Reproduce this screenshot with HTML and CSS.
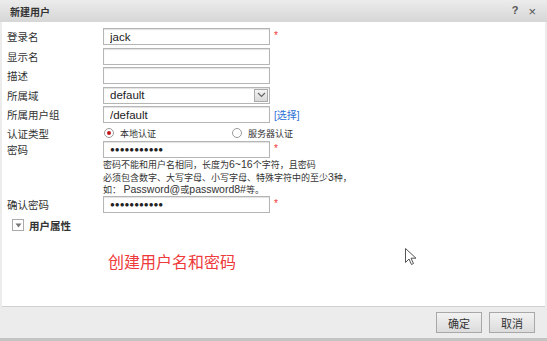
FILE: index.html
```html
<!DOCTYPE html>
<html lang="zh-CN">
<head>
    <meta charset="UTF-8">
    <meta name="viewport" content="width=device-width, initial-scale=1.0">
    <title>新建用户</title>
    <link rel="stylesheet" href="styles.css">
</head>
<body>

    <div class="dialog">
        <!-- Title bar -->
        <div class="titlebar">
            <span class="title">新建用户</span>
            <span class="tools"><span class="help">?</span><span class="close">×</span></span>
        </div>

        <!-- Form -->
        <div class="content">
            <div class="row">
                <label>登录名</label>
                <input class="field" type="text" value="jack">
                <span class="req">*</span>
            </div>
            <div class="row">
                <label>显示名</label>
                <input class="field" type="text">
            </div>
            <div class="row">
                <label>描述</label>
                <input class="field" type="text">
            </div>
            <div class="row">
                <label>所属域</label>
                <div class="field select">
                    <span>default</span>
                    <span class="arrow">
                        <svg width="9" height="6" viewBox="0 0 9 6"><path d="M1 1l3.5 3.5L8 1" fill="none" stroke="#666" stroke-width="1.2"/></svg>
                    </span>
                </div>
            </div>
            <div class="row">
                <label>所属用户组</label>
                <input class="field" type="text" value="/default">
                <a class="pick">[选择]</a>
            </div>
            <div class="row auth">
                <label>认证类型</label>
                <span class="radio checked"></span><span class="radio-text">本地认证</span>
                <span class="radio second"></span><span class="radio-text">服务器认证</span>
            </div>
            <div class="row">
                <label>密码</label>
                <input class="field pwd" type="text" value="●●●●●●●●●●●">
                <span class="req">*</span>
            </div>
            <div class="hint">
                密码不能和用户名相同，长度为<span class="latin">6~16</span>个字符，且密码<br>
                必须包含数字、大写字母、小写字母、特殊字符中的至少<span class="latin">3</span>种，<br>
                如： <span class="latin">Password@</span>或<span class="latin">password8#</span>等。
            </div>
            <div class="row">
                <label>确认密码</label>
                <input class="field pwd" type="text" value="●●●●●●●●●●●">
                <span class="req">*</span>
            </div>
            <div class="section">
                <span class="toggle">
                    <svg width="7" height="5" viewBox="0 0 7 5"><path d="M0.5 0.5h6L3.5 4.5z" fill="#777"/></svg>
                </span>
                <span class="section-title">用户属性</span>
            </div>
            <div class="note">创建用户名和密码</div>

            <!-- mouse pointer left in the screenshot -->
            <svg class="pointer" width="12" height="18" viewBox="0 0 12 18">
                <path d="M0.5 0.5v14l3.5-3.5 2.5 5.5 2-1-2.5-5.3h5z" fill="#fff" stroke="#555" stroke-width="1"/>
            </svg>
        </div>

        <!-- Buttons -->
        <div class="footer">
            <button>确定</button>
            <button>取消</button>
        </div>
    </div>

</body>
</html>
```

FILE: styles.css
```css
body {
    margin: 0;
    font-family: "Liberation Sans", Arial, "Noto Sans CJK SC", sans-serif;
    font-size: 12px;
    color: #333;
    background-color: #fff;
}

.dialog {
    width: 547px;
    height: 341px;
    display: flex;
    flex-direction: column;
    background-color: #ececec;
    border-bottom: 3px solid #c4c4c4;
    box-sizing: border-box;
}

.titlebar {
    height: 22px;
    display: flex;
    align-items: center;
    justify-content: space-between;
    padding: 0 8px 0 10px;
    background: linear-gradient(#ececec, #d6d6d6);
}

.title {
    font-weight: bold;
    color: #333;
    font-size: 10px;
}

.tools {
    display: flex;
    gap: 10px;
    color: #555;
    padding-right: 3px;
}

.help {
    font-weight: bold;
    font-size: 11px;
}

.close {
    font-size: 13px;
}

.content {
    position: relative;
    flex: 1;
    background-color: #fff;
    margin: 0 2px;
    padding: 6px 0 0 5px;
    border-bottom: 1px solid #d0d0d0;
}

.row {
    display: flex;
    align-items: center;
    height: 17px;
    margin-bottom: 2.5px;
}

.row label {
    width: 96px;
    flex-shrink: 0;
    font-size: 10.5px;
}

.field {
    width: 167px;
    height: 17px;
    box-sizing: border-box;
    border: 1px solid #b5b5b5;
    box-shadow: inset 0 1px 1px #e2e2e2;
    padding: 0 6px;
    font-family: inherit;
    font-size: 11.5px;
    color: #222;
    margin: 0;
}

.pwd {
    font-size: 8px;
}

.select {
    display: flex;
    align-items: center;
    justify-content: space-between;
    padding: 0 1px 0 6px;
}

.arrow {
    width: 14px;
    height: 13px;
    display: flex;
    align-items: center;
    justify-content: center;
    border: 1px solid #aaa;
    box-sizing: border-box;
    background: linear-gradient(#f4f4f4, #d8d8d8);
}

.req {
    color: #e33;
    font-size: 10px;
    margin-left: 4px;
    align-self: flex-start;
    margin-top: 2px;
}

.pick {
    color: #2a6fd6;
    margin-left: 4px;
    font-size: 10px;
}

.auth {
    height: 15px;
    margin-bottom: 0.5px;
}

.radio {
    width: 10px;
    height: 10px;
    border: 1px solid #9a9a9a;
    border-radius: 50%;
    box-sizing: border-box;
    margin-left: 1px;
    position: relative;
}

.radio.checked::after {
    content: "";
    position: absolute;
    left: 2px;
    top: 2px;
    width: 4px;
    height: 4px;
    border-radius: 50%;
    background-color: #c0161b;
}

.radio.second {
    margin-left: 76px;
}

.radio-text {
    margin-left: 6px;
    font-size: 9px;
}

.hint {
    margin: -1.5px 0 -0.5px 96px;
    font-size: 9px;
    line-height: 11.5px;
}

.hint .latin {
    font-size: 10.5px;
}

.section {
    display: flex;
    align-items: center;
    height: 12px;
    margin: 6px 0 0 5px;
}

.toggle {
    width: 10px;
    height: 10px;
    border: 1px solid #aaa;
    display: flex;
    align-items: center;
    justify-content: center;
    margin-right: 5px;
}

.section-title {
    font-weight: bold;
    font-size: 10.5px;
}

.note {
    margin: 21.5px 0 0 101px;
    color: #ee3a3a;
    font-size: 16px;
    line-height: 20px;
}

.pointer {
    position: absolute;
    left: 403px;
    top: 226px;
}

.footer {
    height: 31px;
    display: flex;
    justify-content: flex-end;
    align-items: center;
    gap: 7px;
    padding-right: 12px;
}

button {
    width: 46px;
    height: 21px;
    border: 1px solid #a8a8a8;
    background: linear-gradient(#f2f2f2, #dcdcdc);
    font-family: inherit;
    font-size: 11px;
    color: #333;
    padding: 0;
    cursor: pointer;
}
```
